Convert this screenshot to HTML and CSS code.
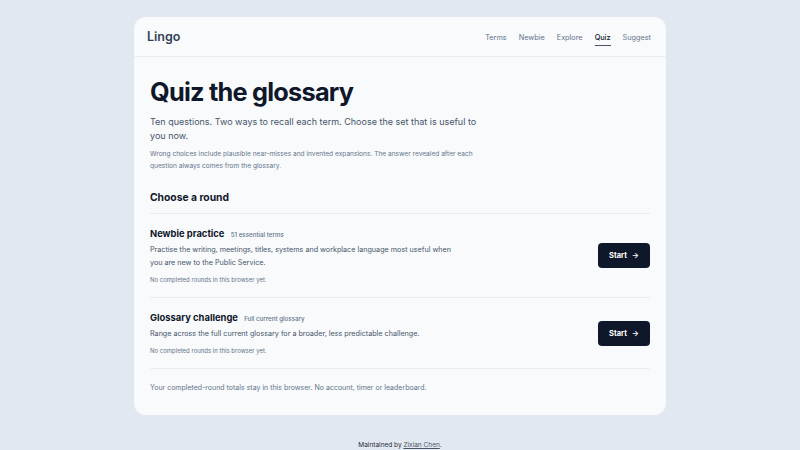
FILE: index.html
```html
<!DOCTYPE html>
<html lang="en">
<head>
    <meta charset="UTF-8">
    <meta name="viewport" content="width=device-width, initial-scale=1.0">
    <title>Lingo - Quiz</title>
    <link rel="stylesheet" href="styles.css">
</head>
<body>
    <div class="shell">
        <header class="topbar">
            <a class="brand" href="#">Lingo</a>
            <nav class="nav">
                <a href="#">Terms</a>
                <a href="#">Newbie</a>
                <a href="#">Explore</a>
                <a href="#" class="active">Quiz</a>
                <a href="#">Suggest</a>
            </nav>
        </header>

        <main class="content">
            <h1>Quiz the glossary</h1>
            <p class="lead">Ten questions. Two ways to recall each term. Choose the set that is useful to you now.</p>
            <p class="note">Wrong choices include plausible near-misses and invented expansions. The answer revealed after each question always comes from the glossary.</p>

            <h2>Choose a round</h2>

            <div class="round">
                <div class="round-info">
                    <h3>Newbie practice <span class="tag">51 essential terms</span></h3>
                    <p class="desc">Practise the writing, meetings, titles, systems and workplace language most useful when you are new to the Public Service.</p>
                    <p class="status">No completed rounds in this browser yet.</p>
                </div>
                <button class="start-btn">Start <span class="arrow">&rarr;</span></button>
            </div>

            <div class="round">
                <div class="round-info">
                    <h3>Glossary challenge <span class="tag">Full current glossary</span></h3>
                    <p class="desc">Range across the full current glossary for a broader, less predictable challenge.</p>
                    <p class="status">No completed rounds in this browser yet.</p>
                </div>
                <button class="start-btn">Start <span class="arrow">&rarr;</span></button>
            </div>

            <p class="privacy">Your completed-round totals stay in this browser. No account, timer or leaderboard.</p>
        </main>
    </div>

    <footer class="site-footer">
        Maintained by <a href="#">Zixian Chen</a>.
    </footer>
</body>
</html>
```

FILE: styles.css
```css
* {
    box-sizing: border-box;
}
body {
    margin: 0;
    background: #e2e8f0;
    font-family: Inter, "Noto Sans", sans-serif;
    color: #0f172a;
}
.shell {
    width: 532px;
    margin: 17px auto 0;
    background: #f8fafc;
    border-radius: 12px;
}
.topbar {
    height: 40px;
    display: flex;
    align-items: center;
    justify-content: space-between;
    padding: 0 15px 0 13px;
    border-bottom: 1px solid #e9eef4;
}
.brand {
    font-size: 12.5px;
    font-weight: 600;
    color: #334155;
    text-decoration: none;
}
.nav {
    display: flex;
    gap: 12px;
    padding-top: 2px;
}
.nav a {
    font-size: 7.3px;
    color: #64748b;
    text-decoration: none;
    padding: 3px 0;
    border-bottom: 1.5px solid transparent;
}
.nav a.active {
    color: #0f172a;
    font-weight: 500;
    border-bottom-color: #475569;
}
.content {
    padding: 19px 16px 23px;
}
h1 {
    margin: 0;
    font-size: 25.3px;
    font-weight: 700;
    letter-spacing: -0.03em;
    line-height: 32px;
    color: #0f172a;
}
.lead {
    margin: 7px 0 0;
    width: 335px;
    font-size: 9px;
    line-height: 14px;
    color: #475569;
}
.note {
    margin: 5px 0 0;
    width: 350px;
    font-size: 6.6px;
    line-height: 12px;
    color: #64748b;
}
h2 {
    margin: 19px 0 0;
    padding-bottom: 10px;
    font-size: 10.3px;
    font-weight: 700;
    border-bottom: 1px solid #e9eef4;
}
.round {
    display: flex;
    align-items: center;
    justify-content: space-between;
    padding: 14px 0;
    border-bottom: 1px solid #e9eef4;
}
h3 {
    margin: 0;
    font-size: 9.4px;
    font-weight: 700;
}
.tag {
    margin-left: 4px;
    font-size: 6.2px;
    font-weight: 500;
    color: #64748b;
}
.desc {
    margin: 4px 0 0;
    width: 305px;
    font-size: 7.2px;
    line-height: 13px;
    color: #475569;
}
.status {
    margin: 7px 0 0;
    font-size: 6px;
    color: #64748b;
}
.start-btn {
    width: 52px;
    height: 25px;
    border: none;
    border-radius: 4px;
    background: #0f172a;
    color: #fff;
    font-family: inherit;
    font-size: 7.5px;
    font-weight: 700;
    cursor: pointer;
}
.arrow {
    margin-left: 3px;
}
.privacy {
    margin: 14px 0 0;
    font-size: 7px;
    color: #64748b;
}
.site-footer {
    margin-top: 26px;
    text-align: center;
    font-size: 6.5px;
    color: #1e293b;
}
.site-footer a {
    color: #475569;
}
```
